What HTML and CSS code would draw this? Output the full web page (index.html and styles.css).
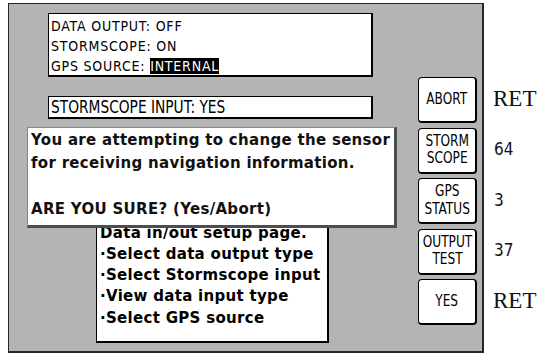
FILE: index.html
```html
<!DOCTYPE html>
<html lang="en">
<head>
    <meta charset="UTF-8">
    <title>Data In/Out Setup</title>
    <link rel="stylesheet" href="styles.css">
</head>
<body>
    <div class="screen">
        <div class="panel">
            <div class="main">
                <div class="box status">
                    <div>DATA OUTPUT: OFF</div>
                    <div>STORMSCOPE: ON</div>
                    <div>GPS SOURCE: <span class="sel">INTERNAL</span></div>
                </div>
                <div class="box input-line"><span>STORMSCOPE INPUT: YES</span></div>
                <div class="box help">
                    <p>Data in/out setup page.</p>
                    <p>·Select data output type</p>
                    <p>·Select Stormscope input</p>
                    <p>·View data input type</p>
                    <p>·Select GPS source</p>
                </div>
            </div>

            <div class="keys">
                <div class="key"><span>ABORT</span></div>
                <div class="key"><span>STORM<br>SCOPE</span></div>
                <div class="key"><span>GPS<br>STATUS</span></div>
                <div class="key"><span>OUTPUT<br>TEST</span></div>
                <div class="key"><span>YES</span></div>
            </div>

            <!-- confirm box over the page -->
            <div class="popup">
                <p>You are attempting to change the sensor<br>for receiving navigation information.</p>
                <p class="ask">ARE YOU SURE? (Yes/Abort)</p>
            </div>
        </div>

        <div class="labels">
            <div class="label ret">RET</div>
            <div class="label num">64</div>
            <div class="label num">3</div>
            <div class="label num">37</div>
            <div class="label ret">RET</div>
        </div>
    </div>
</body>
</html>
```

FILE: styles.css
```css
/* display */
body {
    margin: 0;
    background-color: #fff;
    color: #000;
}

.screen {
    display: flex;
    align-items: flex-start;
    padding: 3px 0 0 8px;
}

.panel {
    position: relative;
    display: flex;
    box-sizing: border-box;
    width: 476px;
    height: 350px;
    padding: 0 5px 0 39px;
    background-color: #b4b4b4;
    border: solid #262626;
    border-width: 1px 2px 2px 1px;
}

.main {
    flex: 1;
    display: flex;
    flex-direction: column;
}

.box {
    box-sizing: border-box;
    background-color: #fff;
    border: solid #000;
    border-width: 1px 2px 2px 1px;
}

.status, .input-line, .key {
    font-family: "DejaVu Sans Condensed", "DejaVu Sans", sans-serif;
    font-stretch: condensed;
}

.status {
    width: 325px;
    height: 64px;
    margin-top: 9px;
    padding: 2px 0 0 2px;
    font-size: 14px;
    line-height: 20px;
    letter-spacing: 0.8px;
}

.sel {
    background-color: #000;
    color: #fff;
}

.input-line {
    width: 325px;
    height: 23px;
    margin-top: 19px;
    padding-left: 2px;
    font-size: 18px;
    line-height: 20px;
    white-space: nowrap;
}

.input-line span {
    display: inline-block;
    transform: scaleX(.85);
    transform-origin: left center;
}

.help {
    width: 233px;
    margin: auto 0 8px 48px;
    padding: 23px 0 12px 3px;
    font-family: "DejaVu Sans", sans-serif;
    font-weight: bold;
    font-size: 15px;
    line-height: 21.3px;
    letter-spacing: 0.3px;
    white-space: nowrap;
}

.help p, .popup p {
    margin: 0;
}

.keys {
    width: 59px;
    display: flex;
    flex-direction: column;
    gap: 4.5px;
    padding-top: 73px;
}

.key {
    height: 46px;
    box-sizing: border-box;
    display: flex;
    align-items: center;
    justify-content: center;
    text-align: center;
    background-color: #fff;
    border: solid #000;
    border-width: 1px 2px 2px 1px;
    border-radius: 4px;
    font-size: 15px;
    line-height: 17.5px;
}

.key span {
    display: inline-block;
    transform: scaleX(.9);
}

.popup {
    position: absolute;
    left: 18px;
    top: 123px;
    width: 370px;
    height: 101px;
    box-sizing: border-box;
    padding: 1px 0 0 3px;
    background-color: #fff;
    border: solid #4d4d4d;
    border-color: #858585 #4d4d4d #4d4d4d #858585;
    border-width: 1px 3px 3px 1px;
    font-family: "DejaVu Sans", sans-serif;
    font-weight: bold;
    font-size: 15px;
    line-height: 23px;
    letter-spacing: 0.3px;
    color: #111;
    white-space: nowrap;
}

.popup .ask {
    margin-top: 23px;
}

.labels {
    display: flex;
    flex-direction: column;
    gap: 4.5px;
    margin-left: 9px;
    padding-top: 74px;
}

.label {
    height: 46px;
    box-sizing: border-box;
    padding-bottom: 3px;
    display: flex;
    align-items: center;
    color: #111;
}

.ret {
    font-family: "Liberation Serif", serif;
    font-size: 23px;
}

.num {
    padding-left: 1px;
    font-family: "DejaVu Sans Condensed", "DejaVu Sans", sans-serif;
    font-stretch: condensed;
    font-size: 17px;
}
```
